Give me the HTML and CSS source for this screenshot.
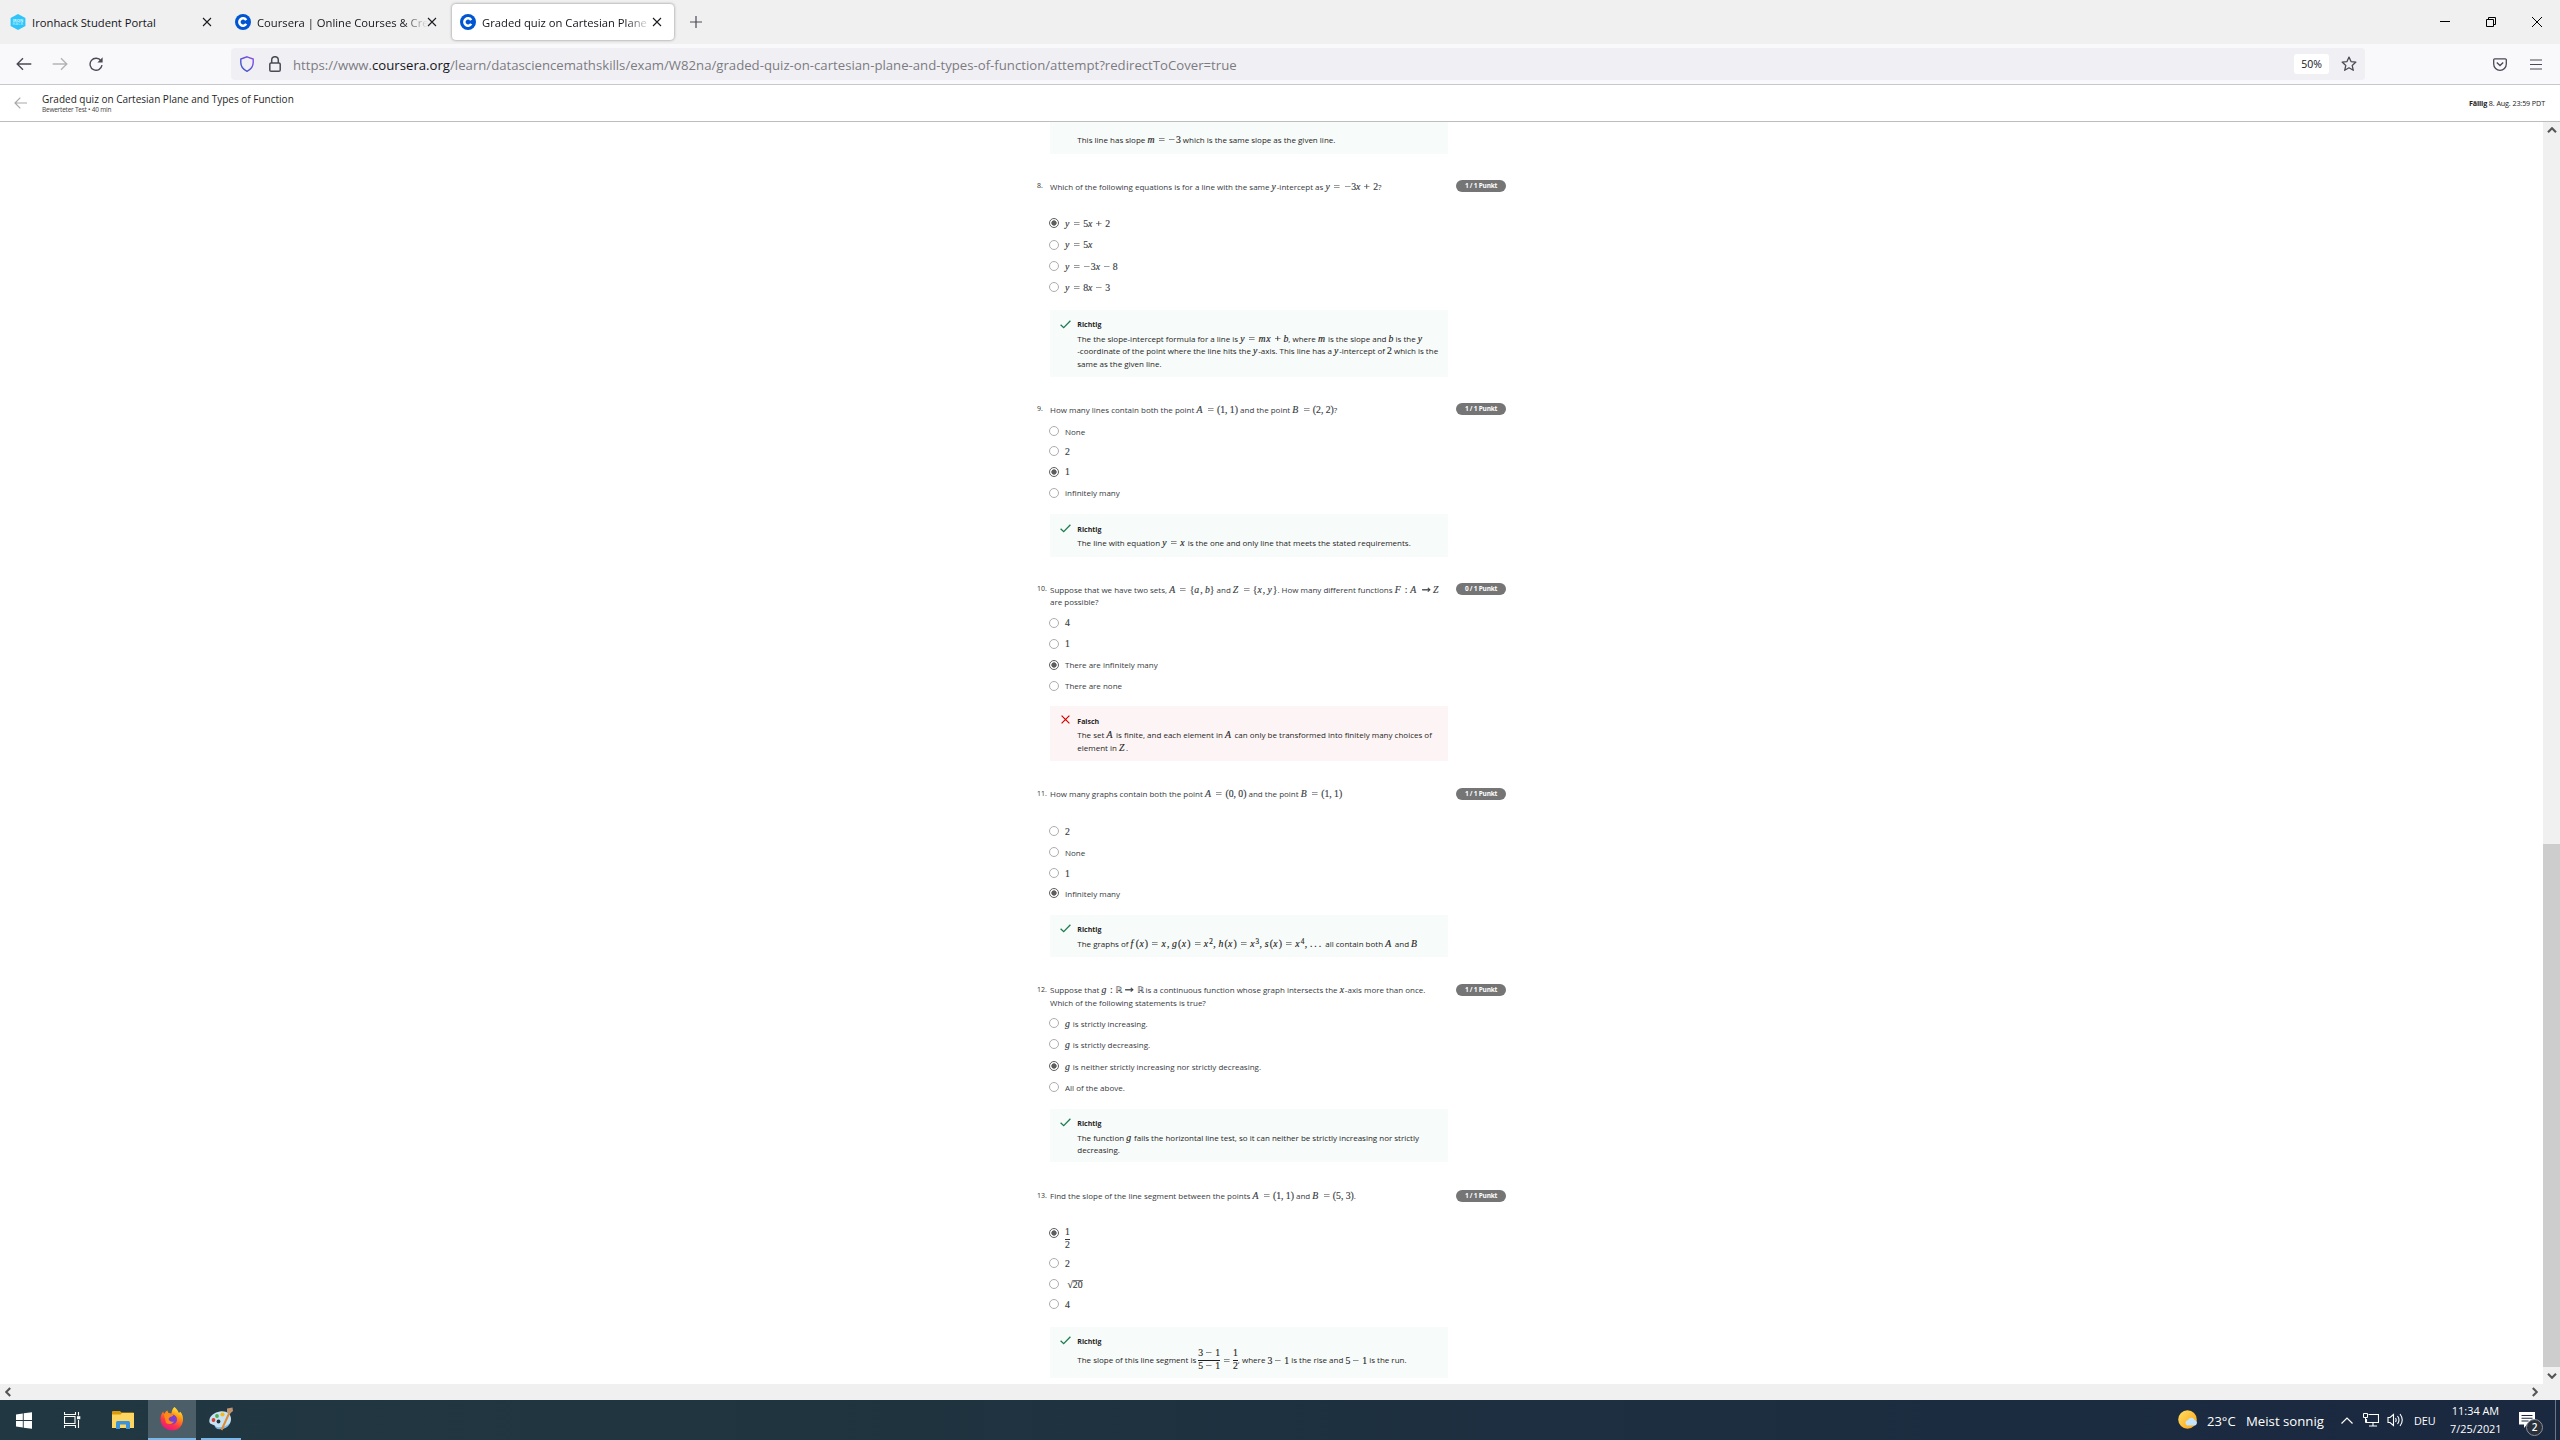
FILE: index.html
```
<!DOCTYPE html>
<html lang="de">
<head>
<meta charset="utf-8">
<title>Graded quiz on Cartesian Plane and Types of Function</title>
<link rel="stylesheet" href="styles.css">
</head>
<body>
<svg class="defs" width="0" height="0" aria-hidden="true">
  <symbol id="close" viewBox="0 0 10 10"><path d="M1 1l8 8M9 1l-8 8" fill="none" stroke="#1c1b22" stroke-width="1.1"/></symbol>
  <symbol id="coursera" viewBox="0 0 16 16"><circle cx="8" cy="8" r="8" fill="#0056d2"/><path d="M11.2 6.1A3.7 3.7 0 1 0 11.2 9.9" fill="none" stroke="#fff" stroke-width="2.5"/></symbol>
  <symbol id="check" viewBox="0 0 11 9"><path d="M.6 4.7L3.7 7.6 10.4.8" fill="none" stroke="#1d7c50" stroke-width="1.3"/></symbol>
  <symbol id="cross" viewBox="0 0 9 9"><path d="M.6.6l7.8 7.8M8.4.6L.6 8.4" fill="none" stroke="#d30001" stroke-width="1.2"/></symbol>
  <symbol id="chev" viewBox="0 0 10 6"><path d="M1 5.2L5 1.2l4 4" fill="none" stroke="#555" stroke-width="2.1"/></symbol>
</svg>

<header class="tabbar">
  <div class="tab">
    <svg class="fav" viewBox="0 0 16 16"><path d="M8 0l7.4 4v8L8 16 .6 12V4z" fill="#2dc5fa"/><g fill="#d8f5ff" font-family="Open Sans, sans-serif" font-weight="700" font-size="4" text-anchor="middle"><text x="8" y="7.6">IRON</text><text x="8" y="11.4" opacity=".6">HACK</text></g></svg>
    <span class="tab-title">Ironhack Student Portal</span><svg class="x"><use href="#close"/></svg>
  </div>
  <div class="tab">
    <svg class="fav"><use href="#coursera"/></svg>
    <span class="tab-title fade">Coursera | Online Courses &amp; Cre</span><svg class="x"><use href="#close"/></svg>
  </div>
  <div class="tab active">
    <svg class="fav"><use href="#coursera"/></svg>
    <span class="tab-title fade slim">Graded quiz on Cartesian Plane</span><svg class="x"><use href="#close"/></svg>
  </div>
  <svg class="plus" viewBox="0 0 12 12"><path d="M6 0v12M0 6h12" stroke="#4a4a55" stroke-width="1.2"/></svg>
  <div class="window-controls">
    <svg viewBox="0 0 10 10"><path d="M0 4.5h10" stroke="#000"/></svg>
    <svg viewBox="0 0 10 10"><path d="M.5 2.5h7v7h-7zM2.5 2.5v-2h7v7h-2" fill="none" stroke="#000"/></svg>
    <svg viewBox="0 0 10 10"><path d="M0 0l10 10M10 0L0 10" stroke="#000"/></svg>
  </div>
</header>

<nav class="navbar">
  <div class="nav-buttons">
    <svg viewBox="0 0 16 14"><path d="M15.3 7H1.2M7 1.2L1.2 7 7 12.8" fill="none" stroke="#4a4a55" stroke-width="1.4"/></svg>
    <svg viewBox="0 0 16 14" opacity=".4"><path d="M.7 7h14.1M9 1.2L14.8 7 9 12.8" fill="none" stroke="#4a4a55" stroke-width="1.4"/></svg>
    <svg viewBox="0 0 16 14"><path d="M13 3.8A6 6 0 1 0 14 8.2" fill="none" stroke="#4a4a55" stroke-width="1.4"/><path d="M14.6.2v5.3H9.4z" fill="#4a4a55"/></svg>
  </div>
  <div class="urlbar">
    <svg class="shield" viewBox="0 0 14 16"><defs><linearGradient id="sh" x1="1" y1="0" x2="0" y2="1"><stop offset="0" stop-color="#8b4dea"/><stop offset="1" stop-color="#2f55c8"/></linearGradient></defs><path d="M7 .8L13.2 3v3.6c0 4-2.500 7-6.200 8.700C3.300 13.600.8 10.600.8 6.600V3z" fill="none" stroke="url(#sh)" stroke-width="1.4"/></svg>
    <svg class="lock" viewBox="0 0 12 16"><rect x=".8" y="7" width="10.4" height="8.2" rx="1.3" fill="none" stroke="#4a4a55" stroke-width="1.5"/><path d="M2.700 7V4a3.300 3.300 0 0 1 6.600 0v3" fill="none" stroke="#4a4a55" stroke-width="1.5"/></svg>
    <span class="url">https://www.<b>coursera.org</b>/learn/datasciencemathskills/exam/W82na/graded-quiz-on-cartesian-plane-and-types-of-function/attempt?redirectToCover=true</span>
    <span class="zoom">50%</span>
    <svg class="star" viewBox="0 0 16 16"><path d="M8 1.100l2 4.500 4.900.5-3.700 3.300 1.100 4.900L8 11.800l-4.300 2.500 1.100-4.900L1.100 6.100 6 5.600z" fill="none" stroke="#4a4a55" stroke-width="1.300" stroke-linejoin="round"/></svg>
  </div>
  <div class="nav-end">
    <svg class="pocket" viewBox="0 0 14 13"><path d="M1.700.8h10.600a1 1 0 0 1 1 1V6A6.300 6.300 0 0 1 .7 6V1.800a1 1 0 0 1 1-1z" fill="none" stroke="#4a4a55" stroke-width="1.300"/><path d="M3.800 4.500L7 7.500l3.200-3" fill="none" stroke="#4a4a55" stroke-width="1.400"/></svg>
    <svg class="burger" viewBox="0 0 12 11"><path d="M0 1h12M0 5.500h12M0 10h12" stroke="#4a4a55" stroke-width="1.200"/></svg>
  </div>
</nav>

<div class="quiz-head">
  <svg viewBox="0 0 13 12"><path d="M13 6H1.300M6.300.7L1 6l5.300 5.300" fill="none" stroke="#a8a8a8" stroke-width="1.200"/></svg>
  <div class="quiz-title"><h1>Graded quiz on Cartesian Plane and Types of Function</h1><p>Bewerteter Test • 40 min</p></div>
  <p class="due"><b>Fällig</b> 8. Aug. 23:59 PDT</p>
</div>

<div class="viewport">
  <main class="quiz">
    <div class="feedback first"><p>This line has slope <span class="m"><i>m</i><s>=</s><u>−</u>3</span> which is the same slope as the given line.</p></div>

    <section class="question q8">
      <span class="num">8.</span>
      <div class="stem">Which of the following equations is for a line with the same <span class="m"><i>y</i></span>-intercept as <span class="m"><i>y</i><s>=</s><u>−</u>3<i>x</i><s class="op">+</s>2</span>?</div>
      <span class="pill">1 / 1 Punkt</span>
      <ul>
        <li><span class="radio on"></span><label><span class="m"><i>y</i><s>=</s>5<i>x</i><s class="op">+</s>2</span></label></li>
        <li><span class="radio"></span><label><span class="m"><i>y</i><s>=</s>5<i>x</i></span></label></li>
        <li><span class="radio"></span><label><span class="m"><i>y</i><s>=</s><u>−</u>3<i>x</i><s class="op">−</s>8</span></label></li>
        <li><span class="radio"></span><label><span class="m"><i>y</i><s>=</s>8<i>x</i><s class="op">−</s>3</span></label></li>
      </ul>
      <div class="feedback"><svg class="ok"><use href="#check"/></svg><h2>Richtig</h2>
        <p>The the slope-intercept formula for a line is <span class="m"><i>y</i><s>=</s><i>mx</i><s class="op">+</s><i class="b">b</i></span>, where <span class="m"><i>m</i></span> is the slope and <span class="m"><i class="b">b</i></span> is the <span class="m"><i>y</i></span><br>-coordinate of the point where the line hits the <span class="m"><i>y</i></span>-axis. This line has a <span class="m"><i>y</i></span>-intercept of <span class="m">2</span> which is the<br>same as the given line.</p></div>
    </section>

    <section class="question q9">
      <span class="num">9.</span>
      <div class="stem">How many lines contain both the point <span class="m"><i class="c">A</i><s>=</s>(1<em>,</em>1)</span> and the point <span class="m"><i class="c">B</i><s>=</s>(2<em>,</em>2)</span>?</div>
      <span class="pill">1 / 1 Punkt</span>
      <ul>
        <li><span class="radio"></span><label>None</label></li>
        <li><span class="radio"></span><label><span class="m">2</span></label></li>
        <li><span class="radio on"></span><label><span class="m">1</span></label></li>
        <li><span class="radio"></span><label>infinitely many</label></li>
      </ul>
      <div class="feedback"><svg class="ok"><use href="#check"/></svg><h2>Richtig</h2>
        <p>The line with equation <span class="m"><i>y</i><s>=</s><i>x</i></span> is the one and only line that meets the stated requirements.</p></div>
    </section>

    <section class="question q10">
      <span class="num">10.</span>
      <div class="stem">Suppose that we have two sets, <span class="m"><i class="c">A</i><s>=</s>{<i>a</i><em>,</em><i class="b">b</i>}</span> and <span class="m"><i class="c">Z</i><s>=</s>{<i>x</i><em>,</em><i>y</i>}</span>. How many different functions <span class="m"><i class="c">F</i><s class="colon">:</s><i class="c">A</i><s class="to">→</s><i class="c">Z</i></span><br>are possible?</div>
      <span class="pill">0 / 1 Punkt</span>
      <ul>
        <li><span class="radio"></span><label><span class="m">4</span></label></li>
        <li><span class="radio"></span><label><span class="m">1</span></label></li>
        <li><span class="radio on"></span><label>There are infinitely many</label></li>
        <li><span class="radio"></span><label>There are none</label></li>
      </ul>
      <div class="feedback wrong"><svg class="bad"><use href="#cross"/></svg><h2>Falsch</h2>
        <p>The set <span class="m"><i class="c">A</i></span> is finite, and each element in <span class="m"><i class="c">A</i></span> can only be transformed into finitely many choices of<br>element in <span class="m"><i class="c">Z</i></span>.</p></div>
    </section>

    <section class="question q11">
      <span class="num">11.</span>
      <div class="stem">How many graphs contain both the point <span class="m"><i class="c">A</i><s>=</s>(0<em>,</em>0)</span> and the point <span class="m"><i class="c">B</i><s>=</s>(1<em>,</em>1)</span></div>
      <span class="pill">1 / 1 Punkt</span>
      <ul>
        <li><span class="radio"></span><label><span class="m">2</span></label></li>
        <li><span class="radio"></span><label>None</label></li>
        <li><span class="radio"></span><label><span class="m">1</span></label></li>
        <li><span class="radio on"></span><label>Infinitely many</label></li>
      </ul>
      <div class="feedback"><svg class="ok"><use href="#check"/></svg><h2>Richtig</h2>
        <p>The graphs of <span class="m loose"><i class="f">f</i>(<i>x</i>)<s>=</s><i>x</i><em>,</em><i>g</i>(<i>x</i>)<s>=</s><i>x</i><sup>2</sup><em>,</em><i>h</i>(<i>x</i>)<s>=</s><i>x</i><sup>3</sup><em>,</em><i>s</i>(<i>x</i>)<s>=</s><i>x</i><sup>4</sup><em>,</em><span class="dots">...</span></span> all contain both <span class="m"><i class="c">A</i></span> and <span class="m"><i class="c">B</i></span></p></div>
    </section>

    <section class="question q12">
      <span class="num">12.</span>
      <div class="stem">Suppose that <span class="m"><i>g</i><s class="colon">:</s><span class="bb">ℝ</span><s class="to">→</s><span class="bb">ℝ</span></span> is a continuous function whose graph intersects the <span class="m"><i>x</i></span>-axis more than once.<br>Which of the following statements is true?</div>
      <span class="pill">1 / 1 Punkt</span>
      <ul>
        <li><span class="radio"></span><label><span class="m"><i>g</i></span> is strictly increasing.</label></li>
        <li><span class="radio"></span><label><span class="m"><i>g</i></span> is strictly decreasing.</label></li>
        <li><span class="radio on"></span><label><span class="m"><i>g</i></span> is neither strictly increasing nor strictly decreasing.</label></li>
        <li><span class="radio"></span><label>All of the above.</label></li>
      </ul>
      <div class="feedback"><svg class="ok"><use href="#check"/></svg><h2>Richtig</h2>
        <p>The function <span class="m"><i>g</i></span> fails the horizontal line test, so it can neither be strictly increasing nor strictly<br>decreasing.</p></div>
    </section>

    <section class="question q13">
      <span class="num">13.</span>
      <div class="stem">Find the slope of the line segment between the points <span class="m"><i class="c">A</i><s>=</s>(1<em>,</em>1)</span> and <span class="m"><i class="c">B</i><s>=</s>(5<em>,</em>3)</span>.</div>
      <span class="pill">1 / 1 Punkt</span>
      <ul>
        <li class="tall"><span class="radio on"></span><label><span class="m frac"><span>1</span><span>2</span></span></label></li>
        <li><span class="radio"></span><label><span class="m">2</span></label></li>
        <li><span class="radio"></span><label><span class="m"><span class="root">√</span><span class="radicand">20</span></span></label></li>
        <li><span class="radio"></span><label><span class="m">4</span></label></li>
      </ul>
      <div class="feedback"><svg class="ok"><use href="#check"/></svg><h2>Richtig</h2>
        <p>The slope of this line segment is <span class="m frac"><span>3<s class="op">−</s>1</span><span>5<s class="op">−</s>1</span></span><span class="m"><s>=</s></span><span class="m frac"><span>1</span><span>2</span></span>, where <span class="m">3<s class="op">−</s>1</span> is the rise and <span class="m">5<s class="op">−</s>1</span> is the run.</p></div>
    </section>
  </main>
  <div class="vscroll"><svg><use href="#chev"/></svg><div class="thumb"></div><svg class="down"><use href="#chev"/></svg></div>
</div>
<div class="hscroll"><svg class="left"><use href="#chev"/></svg><svg class="right"><use href="#chev"/></svg></div>

<footer class="taskbar">
  <div class="cell"><svg width="16" height="17" viewBox="0 0 16 17"><path d="M0 2.400L6.800 1.500V8H0zM7.700 1.300L16 .2V8H7.700zM0 9H6.800v6.500L0 14.600zM7.700 9H16v7.800l-8.300-1.100z" fill="#fff"/></svg></div>
  <div class="cell"><svg width="17" height="16" viewBox="0 0 17 16"><path d="M.5 0v2.500h11V0M.5 4.500h10.500v7H.500zM.5 16v-2.500h11V16M14.500 0v3.500M14.500 8v8" fill="none" stroke="#fff" stroke-width="1.100"/><path d="M13 4.200h3.300v3H13z" fill="#fff"/></svg></div>
  <div class="cell folder"><svg width="22" height="18" viewBox="0 0 22 18"><path d="M0 1a1 1 0 0 1 1-1h7l1.500 1.500H21a1 1 0 0 1 1 1V6H0z" fill="#dc9a0b"/><path d="M0 3.500h8.500L10 2h12v15H0z" fill="#fdd561"/><path d="M4 18v-6.500a1.500 1.500 0 0 1 1.500-1.500h11a1.500 1.500 0 0 1 1.500 1.500V18h-4v-4.500H8V18z" fill="#3a94dc"/></svg></div>
  <div class="cell active"><svg width="24" height="24" viewBox="0 0 24 24"><defs><linearGradient id="ff" x1=".8" y1="0" x2=".3" y2="1"><stop offset="0" stop-color="#fff44f"/><stop offset=".35" stop-color="#ff980e"/><stop offset=".7" stop-color="#ff3647"/><stop offset="1" stop-color="#e31587"/></linearGradient></defs><path d="M14.500 0c3 2.500 3.500 4 4 5.500.8.400 1.500 0 1.800-.7 2 2.200 3 5 2.700 8.200C22.500 19.500 17.800 23.500 12 23.500 5.500 23.500.5 18.500.5 12c0-3.500 1-5.500 2.800-7.500.1 1.200.4 1.800.9 2.200C5 5.200 6.200 4 7.500 3.500c0 1 .3 1.800 1 2.500l3 .5C11.500 4 12.500 1.500 14.500 0z" fill="url(#ff)"/><circle cx="12" cy="12.500" r="5" fill="#7a3fd0"/><path d="M4 7.500c2-1.500 4.500-1.500 6-.5l3.500.8c-.5 1.500-2 2-3.500 2.200L8.500 12C9 14 11.500 15.500 14 14.500c-1 2.500-5 3.500-8 1.500z" fill="#ff8a16"/></svg></div>
  <div class="cell open"><svg width="25" height="24" viewBox="0 0 25 24"><path d="M11 4.500c6-1 11 2 11 7.500 0 6-5 10-11 10-4 0-4-2-5.500-3.500C3.500 17 0 17.500.3 13.500.8 8.500 5.500 5.300 11 4.500z" fill="#c5e3f5"/><path d="M5.500 19c3 2 11 2 15-3-1.500 4-5.500 6.300-10 6.200-3 0-4-1.500-5-3.200z" fill="#7fb4da"/><circle cx="9.500" cy="14.500" r="1.900" fill="#22363f"/><circle cx="4.500" cy="13" r="1.900" fill="#d8402f"/><circle cx="8" cy="9" r="1.900" fill="#4fae4a"/><circle cx="13.500" cy="7.500" r="2.100" fill="#f6b91c"/><path d="M20.500 5.500L12.500 23" stroke="#e08a32" stroke-width="2"/><path d="M18 1.500L23.500.5 24 4l-3.500 3-2.500-1z" fill="#bf9470"/></svg></div>
  <div class="tray">
    <svg class="weather" viewBox="0 0 20 20"><defs><linearGradient id="sun" x1="0" y1="0" x2="1" y2="1"><stop offset="0" stop-color="#ffe066"/><stop offset="1" stop-color="#ff9f0f"/></linearGradient></defs><circle cx="9.500" cy="9.500" r="9.300" fill="url(#sun)"/><path d="M9.500 15.500a2.700 2.700 0 0 1 .2-5.300 3.800 3.800 0 0 1 7-.2 2.900 2.900 0 0 1 .5 5.500z" fill="#c4e4fb"/></svg>
    <span class="temp">23°C</span><span class="cond">Meist sonnig</span>
    <svg class="up" viewBox="0 0 12 7"><path d="M.5 6.500L6 1l5.500 5.500" fill="none" stroke="#fff" stroke-width="1.200"/></svg>
    <svg class="net" viewBox="0 0 16 14"><path d="M5.500 1.500h10v8H3.500V6M10 9.500v3.500M6 13h8" fill="none" stroke="#fff" stroke-width="1.100"/><path d="M.5.500h4v4h-4zM2.500 4.500v5h2" fill="none" stroke="#fff"/></svg>
    <svg class="vol" viewBox="0 0 16 14"><path d="M.5 4.500h2L6 1.500v11l-3.500-3h-2zM8 5q1.300 2 0 4M10 3q3 4 0 8M12.500 1q4.500 6 0 12" fill="none" stroke="#fff" stroke-width="1.100"/></svg>
    <span class="lang">DEU</span>
    <div class="clock"><span>11:34 AM</span><span>7/25/2021</span></div>
    <div class="notes"><svg viewBox="0 0 16 16"><path d="M0 0h16v12.500H8L5 16v-3.500H0z" fill="#fff"/><path d="M2.500 3.500h11M2.500 6.300h11M2.500 9h7" stroke="#1b2941" stroke-width="1.100"/></svg><span>2</span></div>
    <div class="peek"></div>
  </div>
</footer>
</body>
</html>
```
FILE: styles.css
```
* { box-sizing: border-box; margin: 0; padding: 0; }
html, body { width: 2560px; height: 1440px; overflow: hidden; }
body {
  display: flex;
  flex-direction: column;
  background: #fff;
  font-family: "Open Sans", "Noto Sans", sans-serif;
  color: #1f1f1f;
}
svg { display: block; flex: none; }
.defs { position: absolute; }

/* Tab strip */
.tabbar { height: 44px; flex: none; background: #f0f0f0; display: flex; align-items: center; padding-left: 2px; gap: 3.5px; }
.tab { width: 221.5px; height: 36px; display: flex; align-items: center; padding: 0 12px 0 8px; border-radius: 4px; font-size: 11.24px; color: #15141a; }
.tab.active { background: #fff; box-shadow: 0 0 3px rgba(0, 0, 0, .45); }
.fav { width: 16px; height: 16px; margin-right: 6px; }
.tab-title { flex: 1; min-width: 0; white-space: nowrap; }
.tab-title.fade { margin-right: -1px; -webkit-mask-image: linear-gradient(90deg, #000 calc(100% - 26px), transparent); mask-image: linear-gradient(90deg, #000 calc(100% - 26px), transparent); }
.tab-title.slim { margin-right: 1px; }
.x { width: 10px; height: 10px; }
.plus { width: 12px; height: 12px; margin-left: 13px; }
.window-controls { margin-left: auto; display: flex; gap: 36px; padding-right: 18px; }
.window-controls svg { width: 10px; height: 10px; }

/* Navigation bar */
.navbar { height: 41px; flex: none; background: #f9f9fb; border-bottom: 1px solid #c8c8cc; display: flex; align-items: center; }
.nav-buttons { width: 231px; padding-left: 16px; display: flex; gap: 20px; }
.nav-buttons svg { width: 16px; height: 14px; }
.urlbar { width: 2134px; height: 32px; background: #f0f0f4; border-radius: 4px; display: flex; align-items: center; padding: 0 8px 0 9px; }
.shield { width: 14px; height: 16px; }
.lock { width: 12px; height: 16px; margin: 0 12px 0 15px; }
.url { flex: 1; font-size: 13.18px; color: #7c7b82; white-space: nowrap; padding-top: 1px; }
.url b { font-weight: 400; color: #15141a; }
.zoom { width: 35px; height: 20px; line-height: 20px; margin-right: 12px; background: #fff; border-radius: 3px; text-align: center; font-size: 10.5px; color: #15141a; }
.star { width: 16px; height: 16px; }
.nav-end { flex: 1; display: flex; align-items: center; justify-content: flex-end; gap: 23px; padding-right: 18px; }
.pocket { width: 14px; height: 13px; }
.burger { width: 12px; height: 11px; }

/* Quiz header */
.quiz-head { height: 37px; flex: none; border-bottom: 1px solid #bdbdbd; display: flex; align-items: center; padding: 0 15px 0 14px; }
.quiz-head svg { width: 13px; height: 12px; }
.quiz-title { margin-left: 15px; padding-top: 1px; }
.quiz-title h1 { font-size: 10px; font-weight: 400; line-height: 11px; color: #1f1f1f; }
.quiz-title p { font-size: 6.500px; letter-spacing: -.230px; line-height: 9px; color: #444; }
.due { margin-left: auto; font-size: 7.200px; letter-spacing: -.120px; color: #222; }

/* Scrolling page */
.viewport { height: 1262px; flex: none; display: flex; overflow: hidden; }
.quiz { width: 469px; margin-left: 1037px; font-size: 8px; line-height: 12.5px; white-space: nowrap; }
.question { display: grid; grid-template-columns: 13px 398px 58px; }
.num { font-size: 7px; color: #333; line-height: 12px; }
.stem { color: #363a3e; padding-top: .6px; }
.pill { justify-self: end; width: 50px; height: 12px; border-radius: 6px; background: #757575; color: #fff; font-size: 6.500px; letter-spacing: -.220px; font-weight: 700; line-height: 12px; text-align: center; }
.question ul { grid-column: 2; list-style: none; display: grid; color: #363a3e; }
.question li { display: flex; align-items: center; }
.radio { width: 10px; height: 10px; margin: 0 6px 0 -1px; border: 1px solid #adadad; border-radius: 50%; background: #fff; }
.radio.on { border-color: #5e5e5e; background: radial-gradient(circle, #5e5e5e 2.300px, #fff 3px); }
.question label { padding-top: 2px; }
.feedback { grid-column: 2; position: relative; background: #f7fbf9; padding: 8.800px 0 0 27.300px; color: #1f1f1f; }
.feedback.wrong { background: #fdf5f5; }
.feedback.first { width: 398px; height: 32px; margin: 0 0 26px 13px; padding-top: 11.500px; }
.feedback h2 { font-size: 7px; font-weight: 700; line-height: 12px; margin-bottom: 2px; }
.ok { position: absolute; left: 10px; top: 9.500px; width: 11px; height: 9px; }
.bad { position: absolute; left: 11px; top: 9.500px; width: 9px; height: 9px; }

.q8 { grid-template-rows: 32.500px 97.500px 67px; margin-bottom: 26px; }
.q8 ul { grid-template-rows: 21px 22px 21px 21px; }
.q9 { grid-template-rows: 17.500px 93.500px 43px; margin-bottom: 26px; }
.q9 ul { grid-template-rows: 20.500px 20px 21px 21px; }
.q10 { grid-template-rows: 29.200px 93.800px 55px; margin-bottom: 27px; }
.q10 ul { grid-template-rows: 21px 21px 21px 21px; }
.q11 { grid-template-rows: 32.500px 94.500px 42px; margin-bottom: 27px; }
.q11 ul { grid-template-rows: 21px 21px 21px 20px; }
.q12 { grid-template-rows: 28.500px 96.500px 53.500px; margin-bottom: 27.500px; }
.q12 ul { grid-template-rows: 21px 22px 21px 21px; }
.q13 { grid-template-rows: 32px 105px 51px; }
.q13 ul { grid-template-rows: 31px 21px 20px 21px; }
.q9 .feedback, .q10 .feedback { padding-top: 10px; }
.q9 h2, .q10 h2 { margin-bottom: 1.100px; }
.q11 .feedback, .q12 .feedback, .q13 .feedback { padding-top: 9.300px; }
.q11 h2, .q12 h2 { margin-bottom: 1.500px; }
.q11 .stem, .q13 .stem { padding-top: 0; }
.q12 .stem { padding-top: .300px; }
.q13 h2 { margin-bottom: -.800px; }
.question li.tall { align-items: flex-start; }
.tall .radio { margin-top: 6px; }
.question .tall label { padding-top: 4.400px; }
.tall .frac { vertical-align: top; }

/* Formulas */
.m { font-family: "Liberation Serif", "DejaVu Serif", serif; font-size: 9.750px; line-height: 0; white-space: nowrap; -webkit-text-stroke: .150px currentColor; }
.m i { letter-spacing: .09em; }
.m i.b { letter-spacing: 0; }
.m i.c { letter-spacing: .160em; }
.m i.f { letter-spacing: .26em; }
.m s, .m u { display: inline-block; width: .778em; text-align: center; text-decoration: none; letter-spacing: 0; transform: scaleX(1.180); }
.m s { margin: 0 .278em; }
.m s.op { margin: 0 .222em; }
.m s.colon { width: .278em; transform: none; }
.m s.to { width: 1em; font-family: "DejaVu Sans", sans-serif; transform: scaleX(1.150); }
.m em { font-style: normal; margin-right: .240em; }
.m sup { font-size: 7.200px; line-height: 0; vertical-align: 3.500px; }
.m.loose { letter-spacing: .040em; }
.m.loose i:not(.f) { letter-spacing: .115em; }
.m .dots { letter-spacing: .200em; }
.bb { display: inline-block; width: .722em; font-family: "DejaVu Sans", sans-serif; font-size: 8.900px; -webkit-text-stroke: 0; }
.frac { display: inline-flex; flex-direction: column; text-align: center; vertical-align: 7.300px; }
.frac > span { line-height: 10px; }
.frac > span:first-child { line-height: 11px; padding-bottom: 1.500px; border-bottom: 1px solid currentColor; }
.root { display: inline-block; width: .8em; text-align: right; }
.radicand { display: inline-block; line-height: 8.500px; border-top: 1px solid #777; }

/* Scrollbars */
.vscroll { width: 17px; margin-left: auto; background: #f0f0f0; display: flex; flex-direction: column; align-items: center; justify-content: space-between; padding: 5px 0; }
.vscroll svg, .hscroll svg { width: 10px; height: 6px; }
.thumb { width: 17px; height: 523px; margin-top: auto; margin-bottom: 6px; background: #cdcdcd; }
.down { transform: rotate(180deg); }
.hscroll { height: 16px; flex: none; background: #f0f0f0; display: flex; align-items: center; justify-content: space-between; padding: 0 20px 0 3px; }
.left { transform: rotate(-90deg); }
.right { transform: rotate(90deg); }

/* Taskbar */
.taskbar { height: 40px; flex: none; display: flex; color: #fff; background: linear-gradient(90deg, #213741 0, #20353f 25%, #1d2f40 60%, #1a2840 100%); }
.cell { width: 48px; display: flex; align-items: center; justify-content: center; }
.cell.folder { width: 52px; padding-left: 2px; }
.cell.active { background: #4c5e67; border-bottom: 2px solid #76b9ed; }
.cell.open { width: 40px; margin-left: 5px; border-bottom: 2px solid #76b9ed; }
.tray { width: 382px; margin-left: auto; display: flex; align-items: center; }
.weather { width: 20px; height: 20px; }
.temp { width: 39px; margin-left: 9px; font-size: 13px; padding-top: 1px; }
.cond { width: 95px; font-size: 13.200px; padding-top: 1px; }
.up { width: 12px; height: 7px; }
.net { width: 16px; height: 14px; margin-left: 10px; }
.vol { width: 17px; height: 14px; margin-left: 8px; }
.lang { width: 36px; margin-left: 10px; font-size: 10.800px; }
.clock { width: 51px; display: flex; flex-direction: column; text-align: center; font-size: 10.900px; line-height: 18px; white-space: nowrap; }
.notes { position: relative; width: 16px; height: 16px; margin-left: 18px; }
.notes span { position: absolute; left: 7px; top: 7px; width: 17px; height: 17px; border: 1px solid #8a93a0; border-radius: 50%; background: #2b313a; font-size: 10px; font-weight: 600; line-height: 15px; text-align: center; }
.peek { width: 1px; height: 40px; margin-left: auto; margin-right: 4px; background: #6d7684; }
```
